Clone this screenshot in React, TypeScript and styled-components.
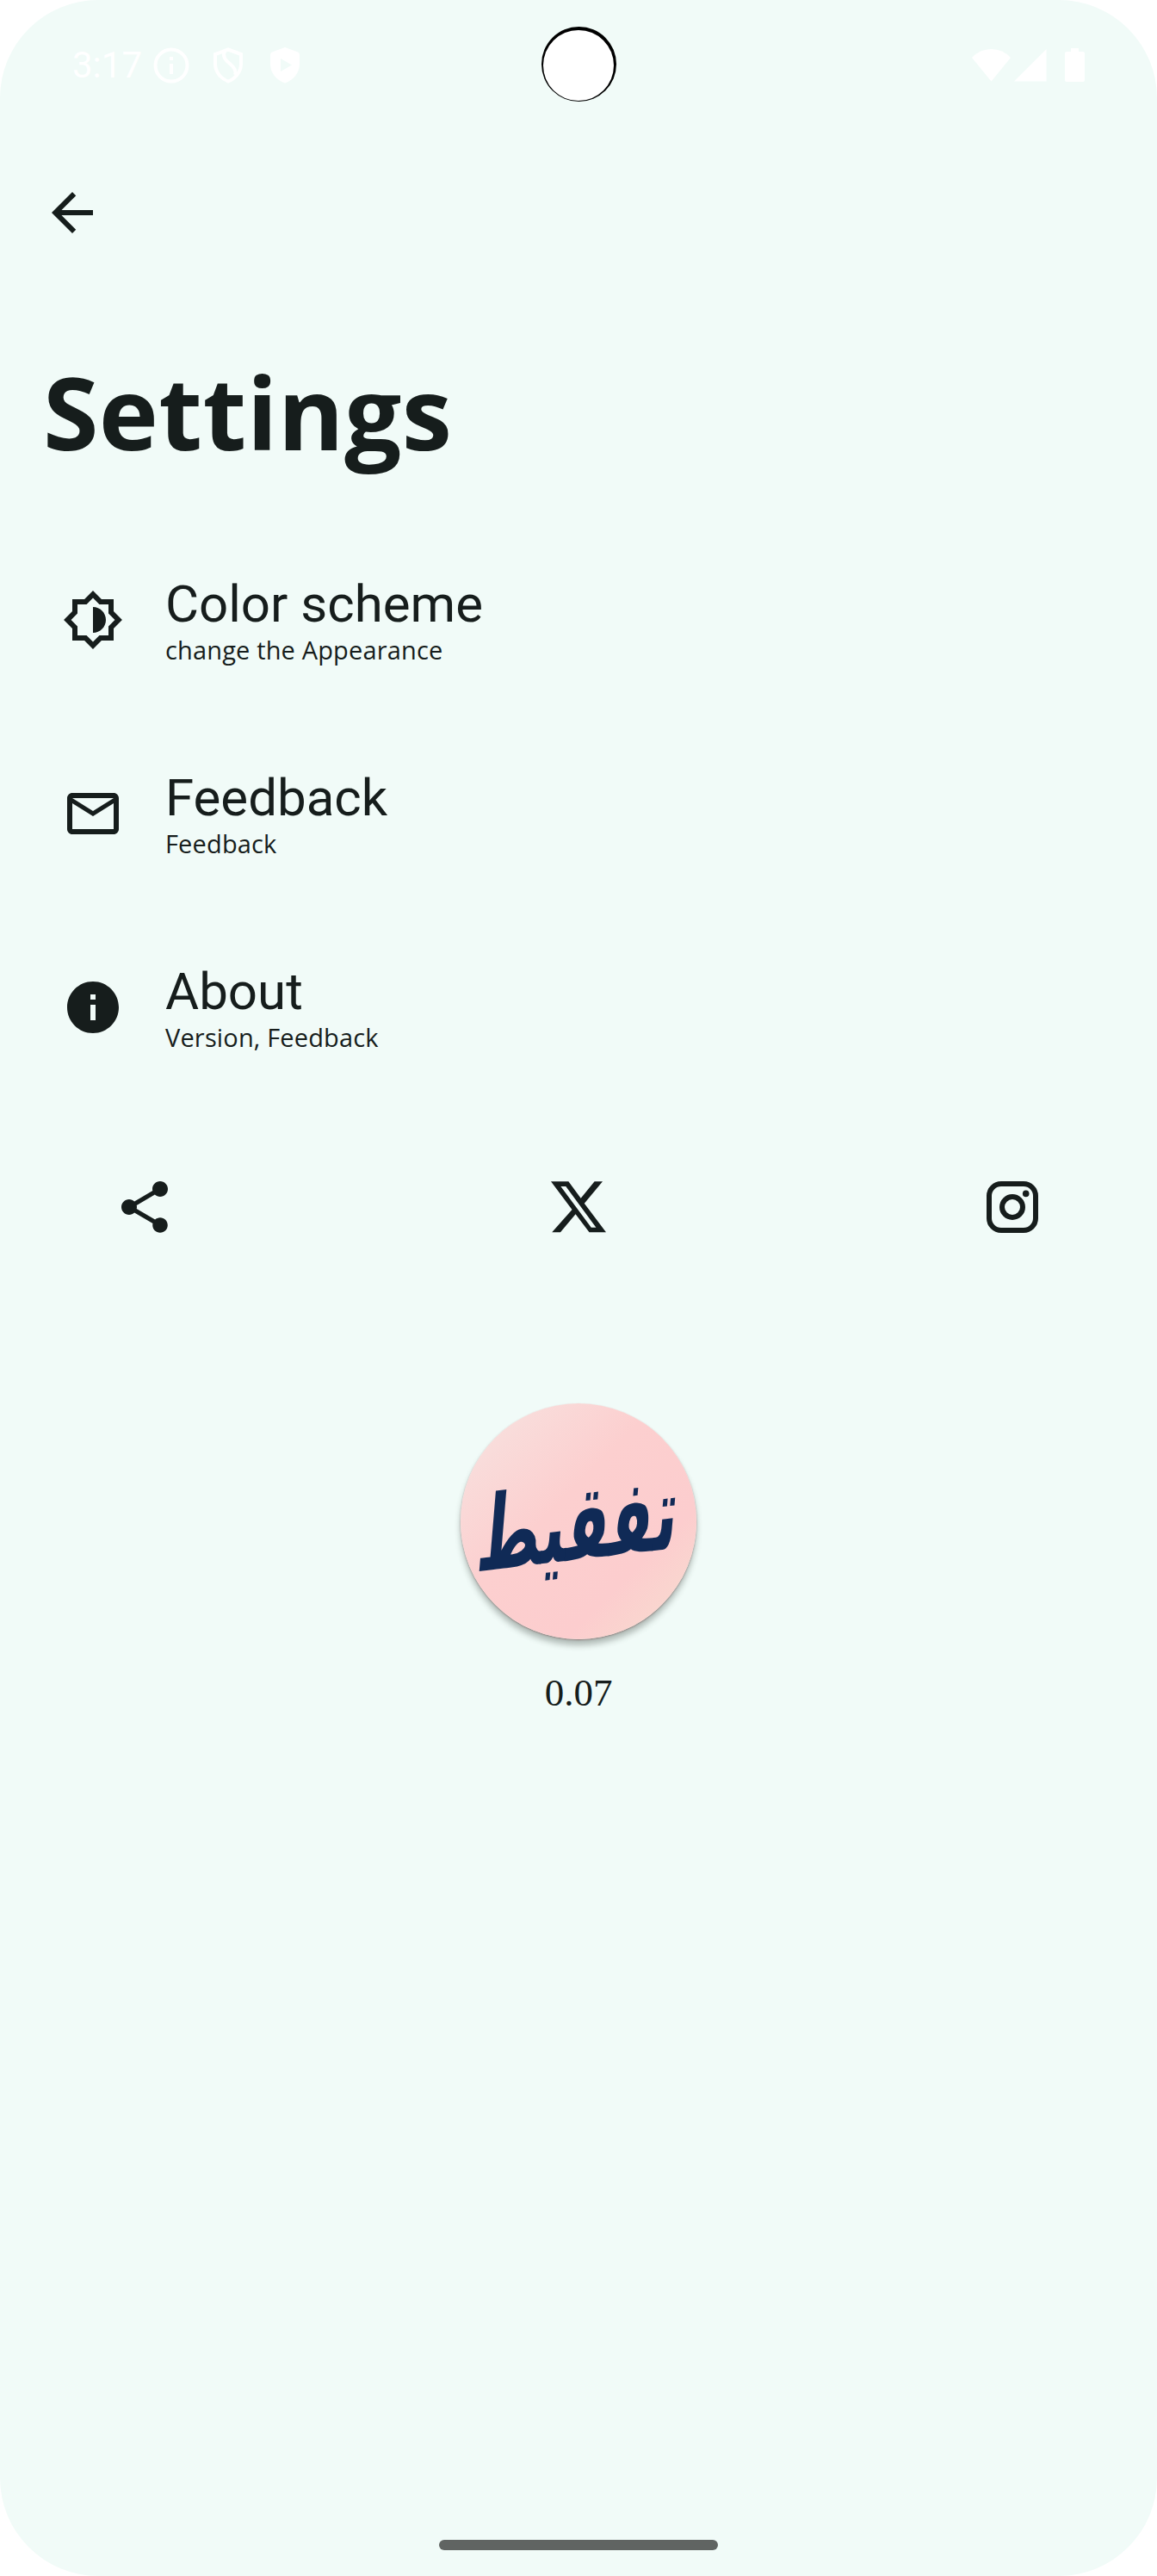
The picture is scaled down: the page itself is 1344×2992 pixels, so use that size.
import React from "react";
import styled, { createGlobalStyle } from "styled-components";

const INK = "#161d1c";
const SURFACE = "#f1fbf8";

const GlobalStyle = createGlobalStyle`
  * { box-sizing: border-box; }
  html, body { margin: 0; padding: 0; background: #fff; }
`;

const Screen = styled.div`
  position: relative;
  display: flex;
  flex-direction: column;
  width: 1344px;
  height: 2992px;
  overflow: hidden;
  border-radius: 114px;
  background: ${SURFACE};
  color: ${INK};
  font-family: Roboto, "Noto Sans", sans-serif;
`;

const StatusBar = styled.header`
  display: flex;
  justify-content: space-between;
  align-items: center;
  height: 151px;
  padding: 0 84px 0 84px;
  color: #fff;
`;

const StatusGroup = styled.div`
  display: flex;
  align-items: center;
`;

const Clock = styled.span`
  width: 94px;
  font-size: 42px;
  line-height: 50px;
`;

const Glyph = styled.svg<{ $w: number; $h: number; $gap?: number }>`
  display: block;
  flex: none;
  width: ${(p) => p.$w}px;
  height: ${(p) => p.$h}px;
  margin-left: ${(p) => p.$gap ?? 0}px;
`;

const Camera = styled.div`
  position: absolute;
  top: 31px;
  left: 628.5px;
  width: 87px;
  height: 87px;
  border-radius: 50%;
  background: #000;
  &::after {
    content: "";
    position: absolute;
    left: 2.5px;
    top: 4px;
    width: 82px;
    height: 82px;
    border-radius: 50%;
    background: #fff;
  }
`;

const TopBar = styled.nav`
  display: flex;
  align-items: center;
  height: 192px;
  padding: 0 48px;
`;

const IconButton = styled.button`
  display: flex;
  padding: 0;
  border: 0;
  background: none;
  color: inherit;
`;

const Title = styled.h1`
  margin: 55px 0 0 50px;
  height: 160px;
  font: 700 117px/160px "Open Sans", "Noto Sans", sans-serif;
  letter-spacing: 0.4px;
  white-space: nowrap;
`;

const List = styled.ul`
  display: flex;
  flex-direction: column;
  margin: 50px 0 0;
  padding: 0;
  list-style: none;
`;

const Item = styled.li`
  display: flex;
  align-items: center;
  gap: 48px;
  height: 225px;
  padding: 0 72px 1px;
`;

const ItemText = styled.div`
  display: flex;
  flex-direction: column;
`;

const ItemTitle = styled.span`
  font-size: 60px;
  line-height: 70px;
`;

const ItemNote = styled.span`
  font: 400 29px/36px "Open Sans", "Noto Sans", sans-serif;
  letter-spacing: 0.15px;
  white-space: nowrap;
`;

const Socials = styled.div`
  display: flex;
  justify-content: space-between;
  align-items: center;
  height: 144px;
  margin-top: 47px;
  padding: 0 132px;
`;

const AppInfo = styled.section`
  display: flex;
  flex-direction: column;
  align-items: center;
  margin-top: 156px;
`;

const AppLogo = styled.div`
  display: flex;
  align-items: center;
  justify-content: center;
  width: 274px;
  height: 274px;
  border-radius: 50%;
  background: linear-gradient(135deg, #f8e0de 8%, #fccfcf 42%, #fccdce 72%, #f9d7cf 88%);
  box-shadow: 0 7px 7px rgba(40, 50, 45, 0.32), 0 1px 2px rgba(120, 60, 60, 0.45);
`;

const LogoWord = styled.span`
  color: #102a56;
  font: 700 92px/120px "DejaVu Sans", sans-serif;
  white-space: nowrap;
  transform: translateY(4px) scale(0.77, 1.3) rotate(-4deg) skewX(-12deg);
`;

const Version = styled.span`
  margin-top: 36px;
  font: 400 45px/52px "Liberation Serif", serif;
`;

const HomeHandle = styled.div`
  width: 324px;
  height: 12px;
  margin: auto auto 30px;
  border-radius: 6px;
  background: #606462;
`;

const MaterialIcon = ({ d }: { d: string }) => (
  <Glyph $w={72} $h={72} viewBox="0 0 24 24" fill="currentColor">
    <path d={d} />
  </Glyph>
);

const ICONS = {
  back: "M20 11H7.83l5.59-5.59L12 4l-8 8 8 8 1.41-1.41L7.83 13H20v-2z",
  brightness:
    "M20 8.69V4h-4.69L12 .69 8.69 4H4v4.69L.69 12 4 15.31V20h4.69L12 23.31 15.31 20H20v-4.69L23.31 12 20 8.69zm-2 5.79V18h-3.52L12 20.48 9.52 18H6v-3.52L3.52 12 6 9.52V6h3.52L12 3.52 14.48 6H18v3.52L20.48 12 18 14.48zM12 17c2.76 0 5-2.24 5-5s-2.24-5-5-5v10z",
  mail: "M22 6c0-1.1-.9-2-2-2H4c-1.1 0-2 .9-2 2v12c0 1.1.9 2 2 2h16c1.1 0 2-.9 2-2V6zm-2 0l-8 5-8-5h16zm0 12H4V8l8 5 8-5v10z",
  info: "M12 2C6.48 2 2 6.48 2 12s4.48 10 10 10 10-4.48 10-10S17.52 2 12 2zm1 15h-2v-6h2v6zm0-8h-2V7h2v2z",
  share:
    "M18 16.08c-.76 0-1.44.3-1.96.77L8.91 12.7c.05-.23.09-.46.09-.7s-.04-.47-.09-.7l7.05-4.11c.54.5 1.25.81 2.04.81 1.66 0 3-1.34 3-3s-1.34-3-3-3-3 1.34-3 3c0 .24.04.47.09.7L8.04 9.81C7.5 9.31 6.79 9 6 9c-1.66 0-3 1.34-3 3s1.34 3 3 3c.79 0 1.5-.31 2.04-.81l7.12 4.16c-.05.21-.08.43-.08.65 0 1.61 1.31 2.92 2.92 2.92 1.61 0 2.92-1.31 2.92-2.92s-1.31-2.92-2.92-2.92z",
};

const ITEMS = [
  { icon: ICONS.brightness, title: "Color scheme", note: "change the Appearance" },
  { icon: ICONS.mail, title: "Feedback", note: "Feedback" },
  { icon: ICONS.info, title: "About", note: "Version, Feedback" },
];

export default function App() {
  return (
    <>
      <GlobalStyle />
      <Screen>
        <StatusBar>
          <StatusGroup>
            <Clock>3:17</Clock>
            <Glyph $w={42} $h={42} viewBox="0 0 42 42" fill="none" stroke="currentColor" strokeWidth="4">
              <circle cx="21" cy="21" r="18.5" />
              <path d="M21 11v4M21 19v12" />
            </Glyph>
            <Glyph $w={34} $h={42} $gap={28} viewBox="0 0 34 42" fill="none" stroke="currentColor" strokeWidth="4">
              <path d="M17 2.5L2 8v11c0 9 6 17 15 20.500c9-3.500 15-11.500 15-20.500V8z" />
              <path d="M13 4c-3 7 1 11 6 15s8 8 6 13" />
            </Glyph>
            <Glyph $w={34} $h={42} $gap={32} viewBox="0 0 34 42" fill="currentColor">
              <path fillRule="evenodd" d="M17 0L2 5.500Q0 6 0 9V19c0 11 7 19 17 22.500c10-3.500 17-11.500 17-22.500V9Q34 6 32 5.500zM12 13l13 7.500-13 7.500z" />
            </Glyph>
          </StatusGroup>
          <StatusGroup>
            <Glyph $w={45} $h={38} viewBox="0 0 45 38" fill="currentColor">
              <path d="M0 10Q9 0 22.500 0T45 10L22.500 37.500z" />
            </Glyph>
            <Glyph $w={38} $h={38} $gap={4} viewBox="0 0 38 38" fill="currentColor">
              <path d="M37.500 0V37.500H0z" />
            </Glyph>
            <Glyph $w={23} $h={39} $gap={21} viewBox="0 0 23 39" fill="currentColor">
              <path d="M7 0h9v4h5q2 0 2 2v31q0 2-2 2H2q-2 0-2-2V6q0-2 2-2h5z" />
            </Glyph>
          </StatusGroup>
        </StatusBar>
        <Camera />
        <TopBar>
          <IconButton aria-label="Back">
            <MaterialIcon d={ICONS.back} />
          </IconButton>
        </TopBar>
        <Title>Settings</Title>
        <List>
          {ITEMS.map((item) => (
            <Item key={item.title}>
              <MaterialIcon d={item.icon} />
              <ItemText>
                <ItemTitle>{item.title}</ItemTitle>
                <ItemNote>{item.note}</ItemNote>
              </ItemText>
            </Item>
          ))}
        </List>
        <Socials>
          <IconButton aria-label="Share">
            <MaterialIcon d={ICONS.share} />
          </IconButton>
          <IconButton aria-label="X">
            <Glyph $w={72} $h={72} viewBox="636 1366 72 72" fill="currentColor">
              <path
                fillRule="evenodd"
                d="M640 1372.300H660.400L674.700 1391.700 690.600 1372.300H700L678.800 1397.700 704 1431.300H684.500L668.600 1410.300 651 1431.300H641.200L664.500 1405zM651.400 1378.100L686.800 1425.700H692.400L657.300 1378.100z"
              />
            </Glyph>
          </IconButton>
          <IconButton aria-label="Instagram">
            <Glyph $w={72} $h={72} viewBox="0 0 72 72" fill="none" stroke="currentColor" strokeWidth="6">
              <rect x="9" y="9" width="54" height="54" rx="14" />
              <circle cx="36" cy="36" r="12" />
              <circle cx="51.700" cy="20.400" r="3.800" fill="currentColor" stroke="none" />
            </Glyph>
          </IconButton>
        </Socials>
        <AppInfo>
          <AppLogo>
            <LogoWord lang="ar" dir="rtl">تفقيط</LogoWord>
          </AppLogo>
          <Version>0.07</Version>
        </AppInfo>
        <HomeHandle />
      </Screen>
    </>
  );
}
